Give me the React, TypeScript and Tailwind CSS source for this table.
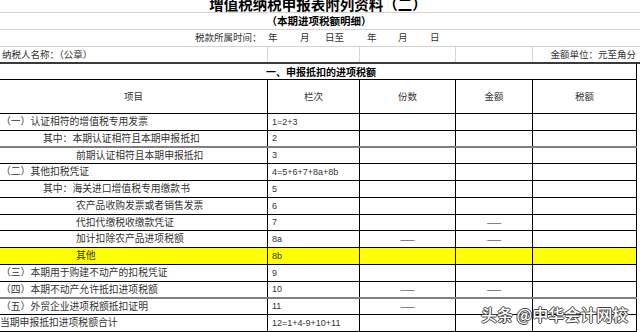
import React from 'react';

type Row = {
  label: string;
  pad: string;
  no: string;
  h: string;
  dash?: [boolean, boolean];
  yellow?: boolean;
};

const rows: Row[] = [
  { label: '（一）认证相符的增值税专用发票', pad: 'pl-[1px]', no: '1=2+3', h: 'h-[17px] border-b border-black' },
  { label: '其中：本期认证相符且本期申报抵扣', pad: 'pl-[43px]', no: '2', h: 'h-[17px] border-b-2 border-[#808080]' },
  { label: '前期认证相符且本期申报抵扣', pad: 'pl-[76px]', no: '3', h: 'h-[16px] border-b border-black' },
  { label: '（二）其他扣税凭证', pad: 'pl-[1px]', no: '4=5+6+7+8a+8b', h: 'h-[17px] border-b border-black' },
  { label: '其中：海关进口增值税专用缴款书', pad: 'pl-[43px]', no: '5', h: 'h-[17px] border-b border-black' },
  { label: '农产品收购发票或者销售发票', pad: 'pl-[76px]', no: '6', h: 'h-[17px] border-b border-black' },
  { label: '代扣代缴税收缴款凭证', pad: 'pl-[76px]', no: '7', h: 'h-[16px] border-b border-black', dash: [false, true] },
  { label: '加计扣除农产品进项税额', pad: 'pl-[76px]', no: '8a', h: 'h-[17px] border-b border-black', dash: [true, true] },
  { label: '其他', pad: 'pl-[76px]', no: '8b', h: 'h-[17px] border-b border-black', yellow: true },
  { label: '（三）本期用于购建不动产的扣税凭证', pad: 'pl-[1px]', no: '9', h: 'h-[17px] border-b border-black' },
  { label: '（四）本期不动产允许抵扣进项税额', pad: 'pl-[1px]', no: '10', h: 'h-[17px] border-b-2 border-[#808080]', dash: [true, true] },
  { label: '（五）外贸企业进项税额抵扣证明', pad: 'pl-[1px]', no: '11', h: 'h-[16px] border-b border-black', dash: [true, false] },
  { label: '当期申报抵扣进项税额合计', pad: 'pl-0', no: '12=1+4-9+10+11', h: 'h-[17px] border-b border-black' },
];

const Dash = () => <span className="text-[9px] leading-none text-[#222]">——</span>;

const App: React.FC = () => {
  return (
    <div className="relative w-[640px] h-[332px] overflow-hidden bg-white text-[#333] font-['Noto_Sans_CJK_SC',sans-serif]">
      {/* title rows */}
      <div className="h-[13px] border-b border-[#d4d4d4] flex items-end justify-center overflow-hidden pr-[4px]">
        <span className="text-[14.5px] leading-[16px] font-bold text-black">增值税纳税申报表附列资料（二）</span>
      </div>
      <div className="h-[17px] border-b border-[#d4d4d4] flex items-center justify-center pr-[2px]">
        <span className="text-[10.5px] leading-none font-bold text-black">（本期进项税额明细）</span>
      </div>
      <div className="h-[17px] border-b border-[#d4d4d4] flex items-center pl-[195px] text-[9.5px] leading-none">
        <span className="w-[73px]">税款所属时间：</span>
        <span className="w-[32px]">年</span>
        <span className="w-[25px]">月</span>
        <span className="w-[42px]">日至</span>
        <span className="w-[31px]">年</span>
        <span className="w-[32px]">月</span>
        <span>日</span>
      </div>
      <div className="h-[17px] border-b-2 border-[#3a3a3a] flex text-[9.5px] leading-none">
        <div className="w-[268px] border-r border-[#d4d4d4] flex items-center pl-[2px]">纳税人名称：（公章）</div>
        <div className="w-[92px] border-r border-[#d4d4d4]" />
        <div className="w-[96px] border-r border-[#d4d4d4]" />
        <div className="w-[77px] border-r border-[#d4d4d4]" />
        <div className="w-[104px] flex items-center justify-end pr-[1px]">金额单位：元至角分</div>
      </div>

      {/* table */}
      <div className="w-[637px]">
        <div className="h-[16px] border-b border-r border-black flex items-center justify-center pl-[6px]">
          <span className="text-[10px] leading-none font-bold text-black">一、申报抵扣的进项税额</span>
        </div>
        <div className="h-[34px] border-b border-black flex text-[9.5px] leading-none">
          <div className="w-[268px] border-r border-black flex items-center justify-center">项目</div>
          <div className="w-[92px] border-r border-black flex items-center justify-center">栏次</div>
          <div className="w-[96px] border-r border-black flex items-center justify-center">份数</div>
          <div className="w-[77px] border-r border-black flex items-center justify-center">金额</div>
          <div className="w-[104px] border-r border-black flex items-center justify-center">税额</div>
        </div>
        {rows.map((r) => (
          <div key={r.no} className={`${r.h} flex ${r.yellow ? 'bg-[#ffff00]' : ''}`}>
            <div className={`w-[268px] border-r border-black flex items-center text-[9.8px] leading-none whitespace-nowrap ${r.pad}`}>
              {r.label}
            </div>
            <div className="w-[92px] border-r border-black flex items-center pl-[4px] font-['Liberation_Sans',sans-serif] text-[9px] leading-none">
              {r.no}
            </div>
            <div className="w-[96px] border-r border-black flex items-center justify-center">
              {r.dash && r.dash[0] ? <Dash /> : null}
            </div>
            <div className="w-[77px] border-r border-black flex items-center justify-center">
              {r.dash && r.dash[1] ? <Dash /> : null}
            </div>
            <div className="w-[104px] border-r border-black" />
          </div>
        ))}
      </div>

      {/* watermark */}
      <div className="absolute left-[481px] top-[304px] text-[16px] leading-[20px] font-medium text-white whitespace-nowrap [text-shadow:1px_0_0_#444,-1px_0_0_#444,0_1px_0_#444,0_-1px_0_#444]">
        头条 @中华会计网校
      </div>
    </div>
  );
};

export default App;
